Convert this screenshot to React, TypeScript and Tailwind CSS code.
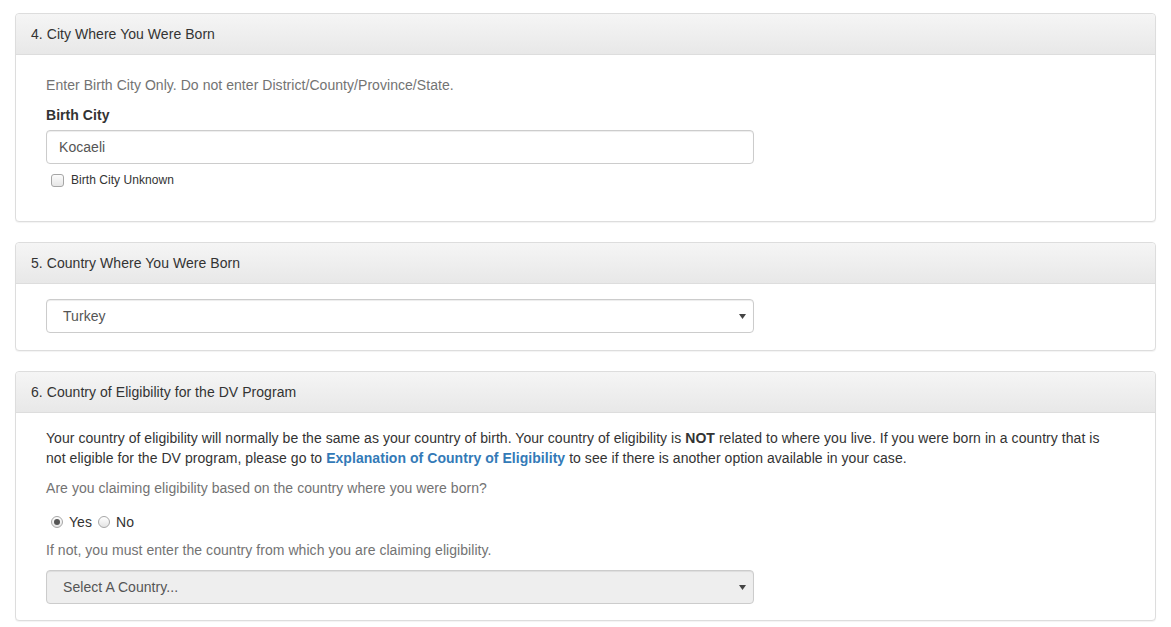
import React from "react";

function Panel({ title, bodyClass, children }: { title: string; bodyClass: string; children: React.ReactNode }) {
  return (
    <div className="mb-5 rounded border border-[#ddd] bg-white shadow-[0_1px_1px_rgba(0,0,0,0.05)]">
      <div className="rounded-t border-b border-[#ddd] bg-gradient-to-b from-[#f5f5f5] to-[#e8e8e8] px-[15px] py-[10px] text-[14px] leading-5 text-[#333]">
        {title}
      </div>
      <div className={bodyClass}>{children}</div>
    </div>
  );
}

function Caret() {
  return (
    <svg width="7" height="5" viewBox="0 0 7 5" className="absolute right-[7px] top-[14px]">
      <path d="M0 0h7L3.5 5z" fill="#444" />
    </svg>
  );
}

function SelectBox({ value, disabled }: { value: string; disabled?: boolean }) {
  return (
    <div
      className={`relative h-[34px] w-[708px] rounded border border-[#ccc] pl-4 text-[14px] leading-[32px] text-[#555] shadow-[inset_0_1px_1px_rgba(0,0,0,0.075)] ${
        disabled ? "bg-[#eee]" : "bg-white"
      }`}
    >
      {value}
      <Caret />
    </div>
  );
}

function Radio({ checked }: { checked?: boolean }) {
  return (
    <span className="flex h-[12px] w-[12px] items-center justify-center rounded-full border border-[#a6a6a6] bg-gradient-to-b from-[#fff] to-[#e4e4e4]">
      {checked && <span className="h-[6px] w-[6px] rounded-full bg-[#555]" />}
    </span>
  );
}

export default function App() {
  return (
    <div className="min-h-screen bg-white px-[15px] pt-[13px] font-['Liberation_Sans',Arial,sans-serif] tracking-[0.05px]">
      <Panel title="4. City Where You Were Born" bodyClass="px-[30px] pt-5 pb-[32px]">
        <p className="mb-[10px] text-[14px] leading-5 text-[#737373]">
          Enter Birth City Only. Do not enter District/County/Province/State.
        </p>
        <div className="mb-[5px] text-[14px] font-bold leading-5 text-[#333]">Birth City</div>
        <div className="h-[34px] w-[708px] rounded border border-[#ccc] bg-white px-3 text-[14px] leading-[32px] text-[#555] shadow-[inset_0_1px_1px_rgba(0,0,0,0.075)]">
          Kocaeli
        </div>
        <div className="mt-[7px] flex h-[18px] items-center pl-[5px] text-[12px] text-[#333]">
          <span className="mr-[7px] h-[13px] w-[13px] rounded-[3px] border border-[#a6a6a6] bg-gradient-to-b from-[#fcfcfc] to-[#e6e6e6]" />
          Birth City Unknown
        </div>
      </Panel>

      <Panel title="5. Country Where You Were Born" bodyClass="px-[30px] pt-[15px] pb-[17px]">
        <SelectBox value="Turkey" />
      </Panel>

      <Panel title="6. Country of Eligibility for the DV Program" bodyClass="px-[30px] pt-[15px] pb-4">
        <p className="mb-[10px] w-[1068px] text-[14px] leading-5 text-[#333]">
          Your country of eligibility will normally be the same as your country of birth. Your country of eligibility
          is <b>NOT</b> related to where you live. If you were born in a country that is not eligible for the DV
          program, please go to{" "}
          <a className="font-bold text-[#337ab7]">Explanation of Country of Eligibility</a> to see if there is another
          option available in your case.
        </p>
        <p className="text-[14px] leading-5 text-[#737373]">
          Are you claiming eligibility based on the country where you were born?
        </p>
        <div className="mt-[14px] flex h-5 items-center pl-[5px] text-[14px] text-[#333]">
          <Radio checked />
          <span className="ml-[6px] mr-[6px]">Yes</span>
          <Radio />
          <span className="ml-[6px]">No</span>
        </div>
        <p className="mt-2 mb-[10px] text-[14px] leading-5 text-[#737373]">
          If not, you must enter the country from which you are claiming eligibility.
        </p>
        <SelectBox value="Select A Country..." disabled />
      </Panel>
    </div>
  );
}
